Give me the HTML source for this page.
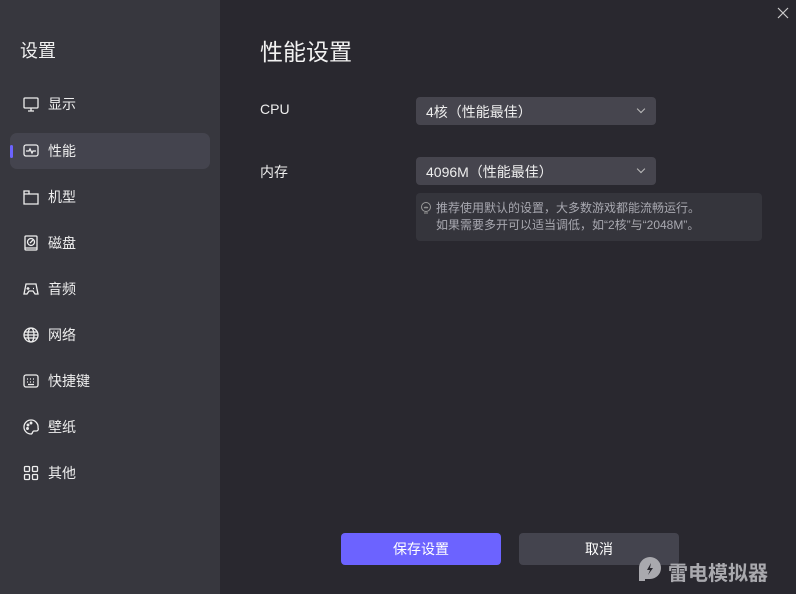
<!DOCTYPE html>
<html><head><meta charset="utf-8"><style>
*{margin:0;padding:0;box-sizing:border-box}
body{width:796px;height:594px;overflow:hidden;background:#29282f;font-family:"Liberation Sans","Noto Sans CJK SC",sans-serif;color:#e8e8ec;position:relative}
.side{position:absolute;left:0;top:0;width:220px;height:594px;background:#37373e}
.side h1{position:absolute;left:20px;top:37px;font-size:18px;font-weight:normal;color:#f0f0f0}
.item{position:absolute;left:10px;width:200px;height:36px;border-radius:7px;font-size:14px;color:#eee}
.item svg{position:absolute;left:13px;top:10px}
.item span{position:absolute;left:38px;top:8px}
.item.sel{background:#44444e}
.item.sel:before{content:"";position:absolute;left:0;top:12px;width:3px;height:13px;background:#6c63ff;border-radius:2px}
.main h2{position:absolute;left:260px;top:33px;font-size:23px;font-weight:normal;color:#f2f2f2}
.lbl{position:absolute;left:260px;font-size:14px;color:#eee}
.dd{position:absolute;left:416px;width:240px;height:28px;background:#46454e;border-radius:4px;font-size:14px;color:#eee;padding:5px 10px}
.dd:after{content:"";position:absolute;right:12px;top:9px;width:5px;height:5px;border-right:1px solid #bbb;border-bottom:1px solid #bbb;transform:rotate(45deg)}
.tip{position:absolute;left:416px;top:193px;width:346px;height:48px;background:#35353c;border-radius:4px;font-size:12px;color:#a8a8b0;line-height:17px;padding:7px 0 0 20px}
.btn{position:absolute;top:533px;width:160px;height:32px;border-radius:4px;font-size:14px;text-align:center;line-height:32px;color:#fff}
</style></head><body>
<div class="side">
<h1>设置</h1>
<div class="item" style="top:86px"><svg width="16" height="16" fill="none" stroke="#eee" stroke-width="1.3"><rect x="1" y="2" width="14" height="10" rx="1"/><path d="M5 15h6M8 12v3"/></svg><span>显示</span></div>
<div class="item sel" style="top:133px"><svg width="16" height="16" fill="none" stroke="#eee" stroke-width="1.3"><rect x="1" y="2" width="14" height="11" rx="2"/><path d="M3 8h3l1-2 2 4 1-2h3"/></svg><span>性能</span></div>
<div class="item" style="top:179px"><svg width="16" height="16" fill="none" stroke="#eee" stroke-width="1.3"><path d="M1 2h5v3h9v10H1zM1 5h5"/></svg><span>机型</span></div>
<div class="item" style="top:225px"><svg width="16" height="16" fill="none" stroke="#eee" stroke-width="1.3"><rect x="2" y="1" width="12" height="14" rx="1"/><circle cx="8" cy="7" r="3.5"/><path d="M7 8l3-3M2 13h12"/></svg><span>磁盘</span></div>
<div class="item" style="top:271px"><svg width="16" height="16" fill="none" stroke="#eee" stroke-width="1.3"><path d="M3 3h10l2 10-3 0-2-3H6l-2 3H1z"/><path d="M5 6v3M3.5 7.5h3M10 7.5h1"/></svg><span>音频</span></div>
<div class="item" style="top:317px"><svg width="16" height="16" fill="none" stroke="#eee" stroke-width="1.3"><circle cx="8" cy="8" r="7"/><ellipse cx="8" cy="8" rx="3" ry="7"/><path d="M1 8h14M2 5h12M2 11h12"/></svg><span>网络</span></div>
<div class="item" style="top:363px"><svg width="16" height="16" fill="none" stroke="#eee" stroke-width="1.3"><rect x="1" y="2" width="14" height="12" rx="2"/><path d="M4 6h1M7 6h1M10 6h1M4 9h1M7 9h1M10 9h1M5 11.5h6"/></svg><span>快捷键</span></div>
<div class="item" style="top:409px"><svg width="16" height="16" fill="none" stroke="#eee" stroke-width="1.3"><path d="M8 1a7 7 0 1 0 0 14c2 0 1-3 3-3h2a2 2 0 0 0 2-3A7 7 0 0 0 8 1z"/><circle cx="5" cy="6" r=".8"/><circle cx="8" cy="4" r=".8"/><circle cx="4.5" cy="9.5" r=".8"/></svg><span>壁纸</span></div>
<div class="item" style="top:455px"><svg width="16" height="16" fill="none" stroke="#eee" stroke-width="1.3"><rect x="1.5" y="1.5" width="5" height="5" rx="1"/><rect x="9.5" y="1.5" width="5" height="5" rx="1"/><rect x="1.5" y="9.5" width="5" height="5" rx="1"/><rect x="9.5" y="9.5" width="5" height="5" rx="1"/></svg><span>其他</span></div>
</div>
<div class="main">
<h2>性能设置</h2>
<div class="lbl" style="top:101px">CPU</div>
<div class="dd" style="top:97px">4核（性能最佳）</div>
<div class="lbl" style="top:162px">内存</div>
<div class="dd" style="top:157px">4096M（性能最佳）</div>
<div class="tip"><svg style="position:absolute;left:4px;top:9px" width="12" height="12" fill="none" stroke="#999" stroke-width="1"><circle cx="6" cy="5" r="4.5"/><path d="M4 11h4M4 5l1 1 1-1 1 1 1-1"/></svg>推荐使用默认的设置，大多数游戏都能流畅运行。<br>如果需要多开可以适当调低，如“2核”与“2048M”。</div>
<div class="btn" style="left:341px;background:#6c63ff">保存设置</div>
<div class="btn" style="left:519px;background:#44444e">取消</div>
<svg style="position:absolute;left:777px;top:7px" width="12" height="12" stroke="#ccc" stroke-width="1.2"><path d="M1 1l10 10M11 1L1 11"/></svg>
<svg style="position:absolute;left:637px;top:557px" width="26" height="26"><path d="M2 24V11a11 11 0 1 1 11 11H8v2z" fill="#a9a9ae"/><path d="M14 6l-4 7h3l-2 5 5-7h-3z" fill="#29282f"/></svg>
<div style="position:absolute;left:668px;top:557px;font-size:20px;font-weight:bold;color:#a9a9ae;letter-spacing:0">雷电模拟器</div>
</div>
</body></html>
